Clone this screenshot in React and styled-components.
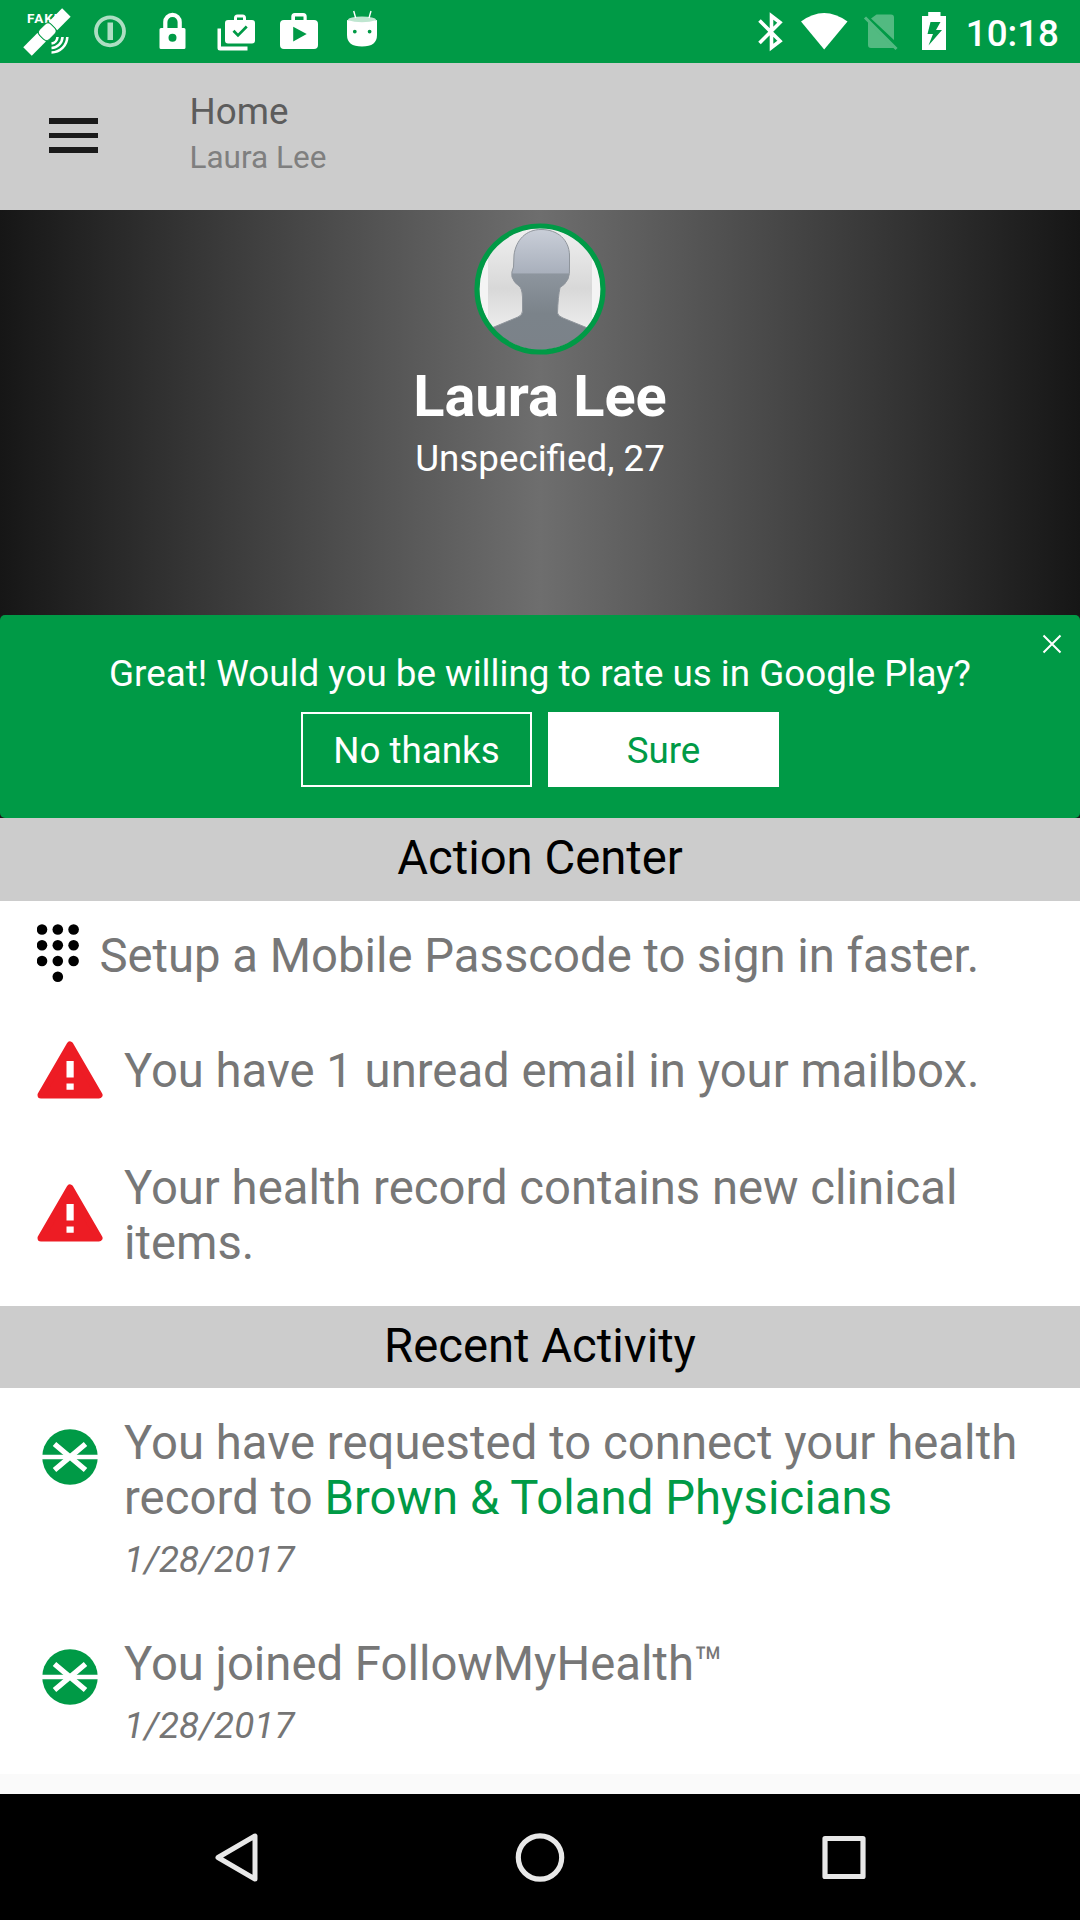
import React from "react";
import styled, { createGlobalStyle } from "styled-components";

const green = "#009a46";

const Global = createGlobalStyle`
  * { box-sizing: border-box; }
  body { margin: 0; background: #fafafa; font-family: Roboto, sans-serif; }
`;

const Screen = styled.div`
  width: 1080px;
  height: 1920px;
  display: flex;
  flex-direction: column;
  background: #fafafa;
  overflow: hidden;
`;

const StatusBar = styled.header`
  height: 63px;
  padding: 0 21px 0 16px;
  display: flex;
  align-items: center;
  justify-content: space-between;
  background: ${green};
`;

const IconGroup = styled.div`
  display: flex;
  height: 63px;
`;

const Clock = styled.span`
  margin-left: 6px;
  font-size: 36.75px;
  line-height: 67px;
  font-weight: 500;
  color: #fff;
`;

const Toolbar = styled.div`
  height: 147px;
  padding: 26px 0 0 48px;
  display: flex;
  background: #ccc;
`;

const MenuButton = styled.div`
  width: 49px;
  height: 35px;
  margin: 29px 91.5px 0 1px;
  display: flex;
  flex-direction: column;
  justify-content: space-between;
`;

const MenuLine = styled.span`
  height: 5.6px;
  background: #1a1a1a;
`;

const Title = styled.div`
  font-size: 36.75px;
  line-height: 46px;
  color: #5c5c5c;
`;

const Subtitle = styled.div`
  font-size: 31.5px;
  line-height: 46px;
  color: #7f7f7f;
`;

const Hero = styled.section`
  height: 405px;
  padding-top: 13px;
  display: flex;
  flex-direction: column;
  align-items: center;
  color: #fff;
  background: linear-gradient(90deg, #161616 0%, #6e6e6e 50%, #161616 100%);
`;

const Name = styled.h1`
  margin: 8px 0 0;
  font-size: 57.75px;
  line-height: 66px;
  font-weight: 700;
`;

const Details = styled.div`
  margin-top: 8px;
  font-size: 36.75px;
  line-height: 44px;
`;

const BannerFrame = styled.section`
  height: 203px;
  background: #1a1a1a;
`;

const Banner = styled.div`
  position: relative;
  height: 203px;
  padding-top: 37px;
  border-radius: 5px;
  display: flex;
  flex-direction: column;
  align-items: center;
  background: ${green};
`;

const BannerText = styled.div`
  font-size: 36.75px;
  line-height: 44px;
  color: #fff;
`;

const Close = styled.svg`
  position: absolute;
  top: 19px;
  right: 18.5px;
`;

const Actions = styled.div`
  margin-top: 16px;
  display: flex;
  gap: 16px;
`;

const Button = styled.button`
  width: 231px;
  height: 75px;
  padding: 2px 0 0;
  border: 2px solid #fff;
  font: 36.75px/69px Roboto, sans-serif;
  color: ${(p) => (p.$filled ? green : "#fff")};
  background: ${(p) => (p.$filled ? "#fff" : "transparent")};
`;

const SectionTitle = styled.h2`
  margin: 0;
  height: ${(p) => p.$height}px;
  font-size: 47.25px;
  line-height: 80px;
  font-weight: 400;
  text-align: center;
  color: #000;
  background: #ccc;
`;

const List = styled.div`
  background: #fff;
`;

const Row = styled.div`
  height: ${(p) => p.$height}px;
  padding: ${(p) => p.$top}px 0 0 37px;
  display: flex;
`;

const RowIcon = styled.svg`
  flex: none;
  margin-top: ${(p) => p.$drop}px;
  margin-right: ${(p) => p.$gap}px;
`;

const RowText = styled.div`
  width: 920px;
  font-size: 47.25px;
  line-height: 55px;
  letter-spacing: ${(p) => p.$tracking || 0}px;
  color: #777;
`;

const Accent = styled.span`
  color: ${green};
`;

const DateText = styled.div`
  margin-top: 12px;
  font-size: 36.75px;
  line-height: 44px;
  letter-spacing: 0.1px;
  font-style: italic;
  color: #757575;
`;

const NavBar = styled.nav`
  height: 126px;
  margin-top: 20px;
  display: flex;
  align-items: center;
  justify-content: center;
  gap: 240px;
  background: #000;
`;

const Slot = ({ x, w = 63, children }) => (
  <svg width={w} height="63" viewBox={`${x} 0 ${w} 63`} fill="#fff">{children}</svg>
);

const StatusIcons = () => (
  <IconGroup>
    <Slot x={16}>
      <text x="27" y="23" fontFamily="Roboto, sans-serif" fontSize="13.500" fontWeight="700" letterSpacing="1">FAKE</text>
      <g transform="translate(48 31) rotate(-45)">
        <rect x="-29" y="-6" width="20" height="12" />
        <rect x="7" y="-6" width="19" height="12" />
        <rect x="-9" y="-7" width="16" height="14" rx="4.500" stroke={green} strokeWidth="1" />
      </g>
      <g fill="none" stroke="#fff" strokeWidth="2.600">
        <path d="M51.500 43.500a7 7 0 0 0 6-6.500M51.500 48A11.500 11.500 0 0 0 62.500 37M51.500 52.500A16 16 0 0 0 67.300 37" />
      </g>
    </Slot>
    <Slot x={79}>
      <g opacity=".68">
        <circle cx="110" cy="31.300" r="14" fill="none" stroke="#fff" strokeWidth="3.800" />
        <rect x="107.500" y="22.500" width="5.500" height="17.500" />
      </g>
    </Slot>
    <Slot x={142}>
      <path d="M165.300 29v-7a7.200 7.200 0 0 1 14.400 0v7" fill="none" stroke="#fff" strokeWidth="4.200" />
      <path fillRule="evenodd" d="M161 28h23a1.500 1.500 0 0 1 1.500 1.500v18a1.500 1.500 0 0 1-1.500 1.500h-23a1.500 1.500 0 0 1-1.500-1.500v-18a1.500 1.500 0 0 1 1.500-1.500zm11.500 5.700a4 4 0 1 0 0 8 4 4 0 0 0 0-8z" />
    </Slot>
    <Slot x={205}>
      <path fillRule="evenodd" d="M228 20h6v-2q0-3.500 3.500-3.500h5q3.500 0 3.500 3.500v2h6q3 0 3 3v17.500q0 3-3 3h-24q-3 0-3-3V23q0-3 3-3zm9 0h6v-2.500h-6zM234.500 29.700l-2 2 5.500 5.500 9.700-9.700-1.900-1.900-7.800 7.800z" />
      <path d="M217.500 28.500h3.500V46.500h26.500v4H220q-2.500 0-2.500-2.500z" />
    </Slot>
    <Slot x={268}>
      <path fillRule="evenodd" d="M284 20h7.300v-3.500q0-3.500 3.500-3.500h8.400q3.500 0 3.500 3.500V20H314q4 0 4 4V45q0 4-4 4h-30q-4 0-4-4V24q0-4 4-4zm11 0h8.500v-3.500H295zm-1.800 6.700v14.800l13.500-7.400z" />
    </Slot>
    <Slot x={331}>
      <path fillRule="evenodd" d="M347 20q15 4.500 30 0v15q0 11.500-15 11.500T347 35zM354.800 29.700a1.900 1.900 0 1 0 0 3.800 1.900 1.900 0 0 0 0-3.800zm14.800 0a1.900 1.900 0 1 0 0 3.800 1.900 1.900 0 0 0 0-3.800z" />
      <ellipse cx="362" cy="19.800" rx="14" ry="3.400" opacity=".75" />
      <path d="M353.700 11l2 7M371 11l-2 7" stroke="#fff" strokeWidth="1.400" />
    </Slot>
  </IconGroup>
);

const SystemIcons = () => (
  <IconGroup>
    <Slot x={744} w={53}>
      <path d="M759.500 20.500l20.500 20.500-8.500 6.500V16l8.500 6.500-20.500 20.500" fill="none" stroke="#fff" strokeWidth="3.600" />
    </Slot>
    <Slot x={797} w={55}>
      <path d="M801 21.500Q824 4.500 847.500 21.500L824.200 49.500z" />
    </Slot>
    <Slot x={852} w={56}>
      <path d="M876.500 14.500H891q3 0 3 3V40L871 18.500zM868 22.500l25.500 25.500H871q-3 0-3-3z" opacity=".32" />
      <path d="M865 17.500l31.500 31.500" stroke="#fff" strokeWidth="3" opacity=".32" />
    </Slot>
    <Slot x={908} w={52}>
      <path fillRule="evenodd" d="M922 16h6.200v-4h12.300v4H946v34h-24zM930.500 22l-3 12h5.500l-4.500 11.500L942 30h-6l4.500-8z" />
    </Slot>
    <Clock>10:18</Clock>
  </IconGroup>
);

const Avatar = () => (
  <svg width="132" height="132" viewBox="-66 -66 132 132">
    <defs>
      <linearGradient id="skin" x1="0" y1="-59" x2="0" y2="60" gradientUnits="userSpaceOnUse">
        <stop offset="0" stopColor="#c9ced8" />
        <stop offset=".36" stopColor="#a9b0bc" />
        <stop offset=".37" stopColor="#8d959e" />
        <stop offset=".7" stopColor="#7b838a" />
        <stop offset="1" stopColor="#7b8289" />
      </linearGradient>
      <linearGradient id="wall" x1="0" y1="0" x2="0" y2="1">
        <stop offset="0" stopColor="#f0f0f0" />
        <stop offset=".55" stopColor="#d8d8d8" />
        <stop offset="1" stopColor="#f2f2f2" />
      </linearGradient>
      <clipPath id="face"><circle r="61" /></clipPath>
    </defs>
    <circle r="61" fill="#f4f4f4" />
    <g clipPath="url(#face)">
      <rect x="-52" y="-61" width="104" height="110" fill="url(#wall)" />
      <path d="M1-59.500C18-59.500 29-49 29.500-34L29.500-22Q30-15 28-10 25-4 20-1.500 18 8 17.500 24Q18 27 23 29L50 40V66H-60V42L-46 38-22 28Q-17.500 26-17.500 22L-17.500 8Q-18-1-21-3-26-6-28-12-29-17-26.500-22L-26-34C-24-49-14-59.500 1-59.500z" fill="url(#skin)" stroke="#8f959c" strokeWidth="1" />
    </g>
    <circle r="63" fill="none" stroke={green} strokeWidth="5.200" />
  </svg>
);

const WarningIcon = ({ drop }) => (
  <RowIcon width="66" height="58" viewBox="0 0 66 58" $drop={drop} $gap={21}>
    <path d="M33 4L62 54H4z" fill="#ed1c24" stroke="#ed1c24" strokeWidth="7" strokeLinejoin="round" />
    <path d="M29.500 20h7.200v16.500h-7.200zM29.500 42.500h7.200v6.300h-7.200z" fill="#fff" />
  </RowIcon>
);

const ConnectIcon = ({ drop }) => (
  <RowIcon width="66" height="58" viewBox="-33 -29 66 58" $drop={drop} $gap={21}>
    <circle r="27.800" fill={green} />
    <path d="M-29 0H29" stroke="#fff" strokeWidth="4.600" />
    <path d="M-15.500-13L0 0l15.500-13M-15.500 13L0 0l15.500 13" fill="none" stroke="#fff" strokeWidth="5.400" />
  </RowIcon>
);

const KeypadIcon = () => (
  <RowIcon width="44" height="60" viewBox="37 923 44 60" $drop={-6} $gap={18.5}>
    {[929.5, 945.2, 961].map((y) => [42, 57.8, 73.6].map((x) => <circle key={x + y} cx={x} cy={y} r="5.300" />))}
    <circle cx="57.800" cy="976.800" r="5.300" />
  </RowIcon>
);

export default function App() {
  return (
    <Screen>
      <Global />
      <StatusBar>
        <StatusIcons />
        <SystemIcons />
      </StatusBar>
      <Toolbar>
        <MenuButton><MenuLine /><MenuLine /><MenuLine /></MenuButton>
        <div>
          <Title>Home</Title>
          <Subtitle>Laura Lee</Subtitle>
        </div>
      </Toolbar>
      <Hero>
        <Avatar />
        <Name>Laura Lee</Name>
        <Details>Unspecified, 27</Details>
      </Hero>
      <BannerFrame>
        <Banner>
          <BannerText>Great! Would you be willing to rate us in Google Play?</BannerText>
          <Actions>
            <Button>No thanks</Button>
            <Button $filled>Sure</Button>
          </Actions>
          <Close width="20" height="20" viewBox="0 0 20 20" stroke="#fff" strokeWidth="2">
            <path d="M1.500 1.500l17 17M18.500 1.500l-17 17" />
          </Close>
        </Banner>
      </BannerFrame>
      <SectionTitle $height={83}>Action Center</SectionTitle>
      <List>
        <Row $height={115} $top={28}>
          <KeypadIcon />
          <RowText>Setup a Mobile Passcode to sign in faster.</RowText>
        </Row>
        <Row $height={115} $top={28}>
          <WarningIcon drop={-3} />
          <RowText>You have 1 unread email in your mailbox.</RowText>
        </Row>
        <Row $height={175} $top={30}>
          <WarningIcon drop={23} />
          <RowText>Your health record contains new clinical items.</RowText>
        </Row>
      </List>
      <SectionTitle $height={82}>Recent Activity</SectionTitle>
      <List>
        <Row $height={220} $top={28}>
          <ConnectIcon drop={12} />
          <RowText $tracking={0.05}>
            You have requested to connect your health record to <Accent>Brown &amp; Toland Physicians</Accent>
            <DateText>1/28/2017</DateText>
          </RowText>
        </Row>
        <Row $height={166} $top={29}>
          <ConnectIcon drop={11} />
          <RowText>
            You joined FollowMyHealth™
            <DateText>1/28/2017</DateText>
          </RowText>
        </Row>
      </List>
      <NavBar>
        <svg width="64" height="64" viewBox="204 1825 64 64" fill="none" stroke="#e8e8e8" strokeWidth="5" strokeLinejoin="round">
          <path d="M218 1857.500L255 1836V1879z" />
        </svg>
        <svg width="64" height="64" viewBox="508 1825 64 64" fill="none" stroke="#e8e8e8" strokeWidth="5.200">
          <circle cx="540" cy="1857.500" r="21.700" />
        </svg>
        <svg width="64" height="64" viewBox="812 1825 64 64" fill="none" stroke="#e8e8e8" strokeWidth="5.200" strokeLinejoin="round">
          <rect x="825" y="1838.500" width="38" height="38" />
        </svg>
      </NavBar>
    </Screen>
  );
}
